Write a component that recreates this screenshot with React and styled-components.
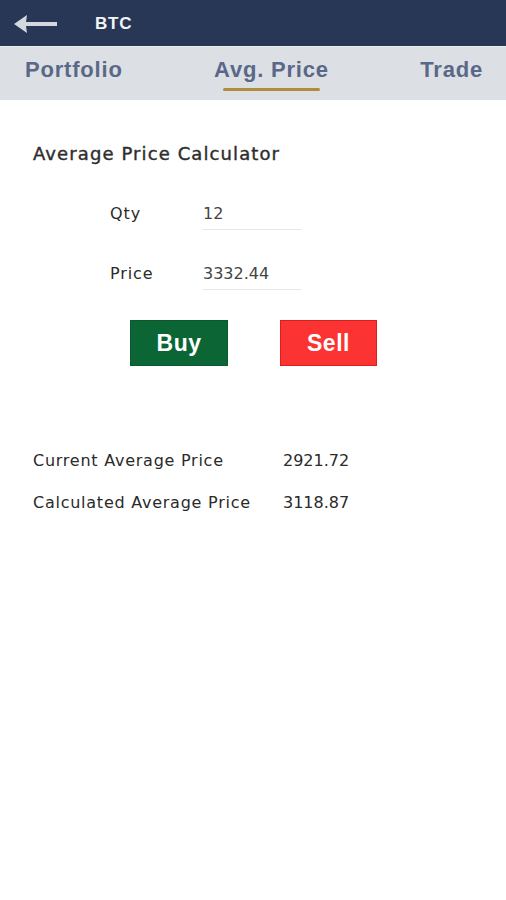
import React from "react";
import styled, { createGlobalStyle } from "styled-components";

const Global = createGlobalStyle`
  html, body { margin: 0; padding: 0; background: #fff; }
  body { font-family: "DejaVu Sans", "Liberation Sans", Arial, sans-serif; }
`;

const Page = styled.div`
  width: 506px;
  min-height: 900px;
  background: #fff;
`;

const Header = styled.header`
  height: 46px;
  background: #273755;
  display: flex;
  align-items: center;
  padding-left: 14px;
  gap: 38px;
`;

const Title = styled.span`
  color: #f2f4f8;
  font-family: "Liberation Sans", Arial, sans-serif;
  font-weight: 700;
  font-size: 17px;
  letter-spacing: 0.8px;
  margin-top: 1px;
`;

const Tabs = styled.nav`
  height: 53px;
  background: #dcdfe4;
  display: flex;
  justify-content: space-between;
  padding: 0 23px 0 25px;
  border-top: 1px solid #e8ebef;
`;

const Tab = styled.div`
  position: relative;
  color: #5a6888;
  font-family: "Liberation Sans", Arial, sans-serif;
  font-weight: 700;
  font-size: 22px;
  padding-top: 10px;
  letter-spacing: 0.8px;
  ${(p) =>
    p.$active &&
    `
    &::after {
      content: "";
      position: absolute;
      left: 9px;
      right: 9px;
      top: 41px;
      height: 3px;
      border-radius: 2px;
      background: #b08d3e;
    }
  `}
`;

const Body = styled.main`
  padding: 43px 0 0 33px;
`;

const Heading = styled.h1`
  margin: 0;
  font-size: 18px;
  font-weight: 400;
  color: #2e2e2e;
  letter-spacing: 1.1px;
  -webkit-text-stroke: 0.4px #2e2e2e;
`;

const Form = styled.div`
  display: grid;
  grid-template-columns: 93px 98px;
  row-gap: 26px;
  margin: 32px 0 0 77px;
  align-items: center;
`;

const Label = styled.span`
  font-size: 16px;
  color: #2a2a2a;
  letter-spacing: 0.9px;
`;

const Field = styled.div`
  font-size: 16px;
  color: #444;
  padding-bottom: 6px;
  border-bottom: 1px solid #e6e6e6;
  padding-top: 8px;
`;

const Buttons = styled.div`
  display: flex;
  gap: 52px;
  margin: 30px 0 0 97px;
`;

const Btn = styled.button`
  width: ${(p) => p.$w || 98}px;
  height: 46px;
  border: 1px solid ${(p) => p.$border};
  background: ${(p) => p.$bg};
  color: #fff;
  font-family: "Liberation Sans", Arial, sans-serif;
  font-weight: 700;
  font-size: 23px;
  letter-spacing: 0.5px;
  padding: 0;
  cursor: pointer;
`;

const Stats = styled.div`
  display: grid;
  grid-template-columns: 250px auto;
  row-gap: 23px;
  margin-top: 85px;
`;

const StatLabel = styled.span`
  font-size: 16px;
  color: #2a2a2a;
  letter-spacing: 0.75px;
`;

const StatValue = styled.span`
  font-size: 16px;
  color: #2a2a2a;
`;

const BackArrow = () => (
  <svg width="43" height="20" viewBox="0 0 43 20" style={{ marginTop: 2 }}>
    <path d="M0 10 L13 1 L12 8 L43 8 L43 12 L12 12 L13 19 Z" fill="#d3d7de" />
  </svg>
);

export default function App() {
  return (
    <Page>
      <Global />
      <Header>
        <BackArrow />
        <Title>BTC</Title>
      </Header>
      <Tabs>
        <Tab>Portfolio</Tab>
        <Tab $active>Avg. Price</Tab>
        <Tab>Trade</Tab>
      </Tabs>
      <Body>
        <Heading>Average Price Calculator</Heading>
        <Form>
          <Label>Qty</Label>
          <Field>12</Field>
          <Label>Price</Label>
          <Field>3332.44</Field>
        </Form>
        <Buttons>
          <Btn $bg="#0b6534" $border="#0a5a2e">Buy</Btn>
          <Btn $bg="#fb3333" $border="#d92020" $w={97}>Sell</Btn>
        </Buttons>
        <Stats>
          <StatLabel>Current Average Price</StatLabel>
          <StatValue>2921.72</StatValue>
          <StatLabel>Calculated Average Price</StatLabel>
          <StatValue>3118.87</StatValue>
        </Stats>
      </Body>
    </Page>
  );
}
